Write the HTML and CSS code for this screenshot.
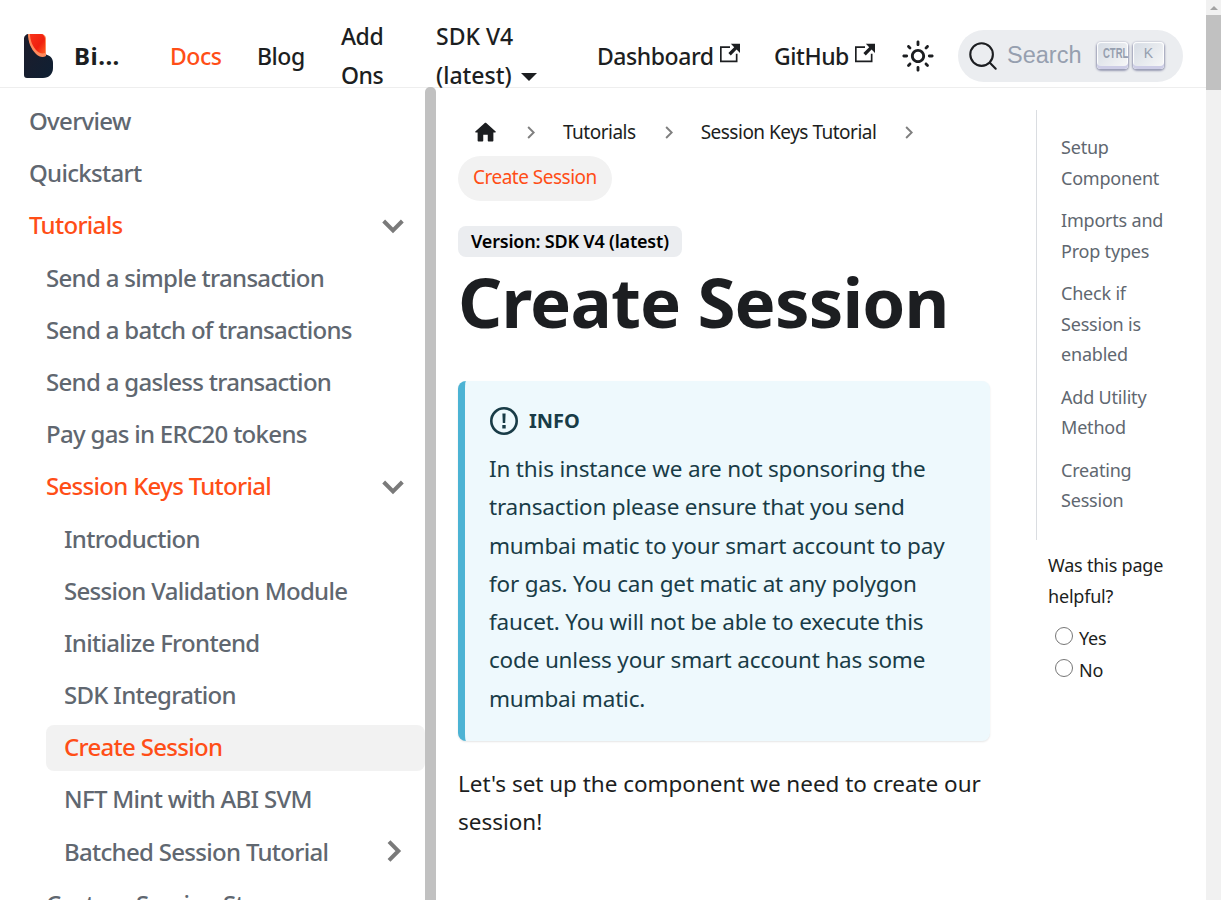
FILE: index.html
```html
<!DOCTYPE html>
<html lang="en">
<head>
<meta charset="utf-8">
<title>Create Session</title>
<link rel="stylesheet" href="styles.css">
</head>
<body>
<div class="page">
  <div class="site">
    <nav class="navbar">
      <a class="brand">
        <svg class="logo" viewBox="0 0 29 44">
          <defs>
            <linearGradient id="dark" x1="0" y1="0" x2="1" y2="1"><stop offset="0" stop-color="#1d1c2b"/><stop offset="1" stop-color="#0f2033"/></linearGradient>
            <linearGradient id="flame" x1="0" y1="0" x2="1" y2="1"><stop offset="0" stop-color="#f8331a"/><stop offset=".6" stop-color="#f0200e"/><stop offset="1" stop-color="#ff5a1f"/></linearGradient>
          </defs>
          <path fill="url(#dark)" d="M5 0h12v20h3c6 1 9 4 9 9v5c0 6-4 10-10 10H3c-2 0-3-1-3-3V5c0-3 2-5 5-5z"/>
          <path fill="#ff8a5c" d="M4 0h13c3 0 5 2 5 5v17c-3 2-7 1-10-2C7 15 4 8 4 0z"/>
          <path fill="url(#flame)" d="M6 0h11c2 0 4 2 4 5v14c-3 1-6 0-8-2C9 13 6 7 6 0z"/>
        </svg>
        <b class="brand-name">Bi...</b>
      </a>
      <a class="nav-link active docs">Docs</a>
      <a class="nav-link blog">Blog</a>
      <a class="nav-link addons">Add Ons</a>
      <a class="nav-link sdk">SDK V4 (latest) <i class="caret"></i></a>
      <a class="nav-link dash">Dashboard <svg class="ext" viewBox="0 0 24 24"><path fill="currentColor" d="M21 13v10h-21v-19h12v2h-10v15h17v-8h2zm3-12h-10.988l4.035 4-6.977 7.07 2.828 2.828 6.977-7.07 4.125 4.172v-11z"/></svg></a>
      <a class="nav-link hub">GitHub <svg class="ext" viewBox="0 0 24 24"><path fill="currentColor" d="M21 13v10h-21v-19h12v2h-10v15h17v-8h2zm3-12h-10.988l4.035 4-6.977 7.07 2.828 2.828 6.977-7.07 4.125 4.172v-11z"/></svg></a>
      <svg class="sun" viewBox="0 0 24 24"><path fill="currentColor" d="M12,9c1.65,0,3,1.35,3,3s-1.35,3-3,3s-3-1.35-3-3S10.35,9,12,9 M12,7c-2.76,0-5,2.24-5,5s2.24,5,5,5s5-2.24,5-5 S14.76,7,12,7L12,7z M2,13l2,0c0.55,0,1-0.45,1-1s-0.45-1-1-1l-2,0c-0.55,0-1,0.45-1,1S1.45,13,2,13z M20,13l2,0c0.55,0,1-0.45,1-1 s-0.45-1-1-1l-2,0c-0.55,0-1,0.45-1,1S19.45,13,20,13z M11,2v2c0,0.55,0.45,1,1,1s1-0.45,1-1V2c0-0.55-0.45-1-1-1S11,1.45,11,2z M11,20v2c0,0.55,0.45,1,1,1s1-0.45,1-1v-2c0-0.55-0.45-1-1-1C11.45,19,11,19.45,11,20z M5.99,4.58c-0.39-0.39-1.03-0.39-1.41,0 c-0.39,0.39-0.39,1.03,0,1.41l1.06,1.06c0.39,0.39,1.03,0.39,1.41,0s0.39-1.03,0-1.41L5.99,4.58z M18.36,16.95 c-0.39-0.39-1.03-0.39-1.41,0c-0.39,0.39-0.39,1.03,0,1.41l1.06,1.06c0.39,0.39,1.03,0.39,1.41,0c0.39-0.39,0.39-1.03,0-1.41 L18.36,16.95z M19.42,5.99c0.39-0.39,0.39-1.03,0-1.41c-0.39-0.39-1.03-0.39-1.41,0l-1.06,1.06c-0.39,0.39-0.39,1.03,0,1.41 s1.03,0.39,1.41,0L19.42,5.99z M7.05,18.36c0.39-0.39,0.39-1.03,0-1.41c-0.39-0.39-1.03-0.39-1.41,0l-1.06,1.06 c-0.39,0.39-0.39,1.03,0,1.41s1.03,0.39,1.41,0L7.05,18.36z"/></svg>
      <div class="search">
        <svg class="search-icon" viewBox="0 0 20 20"><path d="M14.386 14.386l4.0877 4.0877-4.0877-4.0877c-2.9418 2.9419-7.7115 2.9419-10.6533 0-2.9419-2.9418-2.9419-7.7115 0-10.6533 2.9418-2.9419 7.7115-2.9419 10.6533 0 2.9419 2.9418 2.9419 7.7115 0 10.6533z" stroke="currentColor" fill="none" stroke-width="1.4" stroke-linecap="round" stroke-linejoin="round"/></svg>
        <span class="search-text">Search</span>
        <kbd class="key"><span class="ctrl">CTRL</span></kbd>
        <kbd class="key">K</kbd>
      </div>
    </nav>

    <div class="layout">
      <aside class="sidebar">
        <ul class="menu">
          <li class="item">Overview</li>
          <li class="item">Quickstart</li>
          <li class="item active">Tutorials <svg class="chev" viewBox="0 0 24 24"><path d="M5 9l7 7 7-7"/></svg></li>
          <li class="item l1">Send a simple transaction</li>
          <li class="item l1">Send a batch of transactions</li>
          <li class="item l1">Send a gasless transaction</li>
          <li class="item l1">Pay gas in ERC20 tokens</li>
          <li class="item l1 active">Session Keys Tutorial <svg class="chev" viewBox="0 0 24 24"><path d="M5 9l7 7 7-7"/></svg></li>
          <li class="item l2">Introduction</li>
          <li class="item l2">Session Validation Module</li>
          <li class="item l2">Initialize Frontend</li>
          <li class="item l2">SDK Integration</li>
          <li class="item l2 active current">Create Session</li>
          <li class="item l2">NFT Mint with ABI SVM</li>
          <li class="item l2">Batched Session Tutorial <svg class="chev" viewBox="0 0 24 24"><path d="M9 5l7 7-7 7"/></svg></li>
          <li class="item l1">Custom Session Storage</li>
        </ul>
      </aside>
      <div class="side-scroll"></div>

      <main class="content">
        <ul class="crumbs">
          <li class="crumb-home"><svg class="home" viewBox="0 0 24 24"><path fill="currentColor" d="M10 19v-5h4v5c0 .55.45 1 1 1h3c.55 0 1-.45 1-1v-7h1.7c.46 0 .68-.57.33-.87L12.67 3.6c-.38-.34-.96-.34-1.34 0l-8.36 7.53c-.34.3-.13.87.33.87H5v7c0 .55.45 1 1 1h3c.55 0 1-.45 1-1z"/></svg></li>
          <li class="sep"><svg viewBox="0 0 24 24"><path d="M9 5l7 7-7 7"/></svg></li>
          <li class="crumb">Tutorials</li>
          <li class="sep"><svg viewBox="0 0 24 24"><path d="M9 5l7 7-7 7"/></svg></li>
          <li class="crumb">Session Keys Tutorial</li>
          <li class="sep"><svg viewBox="0 0 24 24"><path d="M9 5l7 7-7 7"/></svg></li>
          <li class="crumb current">Create Session</li>
        </ul>
        <span class="badge">Version: SDK V4 (latest)</span>
        <h1 class="title">Create Session</h1>
        <div class="info">
          <div class="info-head">
            <svg class="info-icon" viewBox="0 0 30 30"><circle cx="15" cy="15" r="12.7" fill="none" stroke="currentColor" stroke-width="2.6"/><path fill="currentColor" d="M13.4 7.5h3.2l-.4 9.5h-2.4zM13.3 19h3.4v3.4h-3.4z"/></svg>
            INFO
          </div>
          <p>In this instance we are not sponsoring the transaction please ensure that you send mumbai matic to your smart account to pay for gas. You can get matic at any polygon faucet. You will not be able to execute this code unless your smart account has some mumbai matic.</p>
        </div>
        <p class="prose">Let's set up the component we need to create our session!</p>
      </main>

      <div class="rail">
        <ul class="toc">
          <li>Setup Component</li>
          <li>Imports and Prop types</li>
          <li>Check if Session is enabled</li>
          <li>Add Utility Method</li>
          <li>Creating Session</li>
        </ul>
        <form class="helpful">
          <p>Was this page helpful?</p>
          <label class="choice"><input type="radio" name="helpful"> Yes</label>
          <label class="choice"><input type="radio" name="helpful"> No</label>
        </form>
      </div>
    </div>
  </div>

  <div class="page-scroll"><i class="arrow"></i><div class="thumb"></div></div>
</div>
</body>
</html>
```

FILE: styles.css
```css
* {
  box-sizing: border-box;
}

html, body {
  margin: 0;
  height: 900px;
  overflow: hidden;
}

body {
  font-family: "Noto Sans", "Open Sans", sans-serif;
  color: #1c1e21;
  background: #fff;
}

ul {
  list-style: none;
  margin: 0;
  padding: 0;
}

.page {
  display: flex;
  height: 900px;
}

.site {
  flex: 1;
  min-width: 0;
}

.page-scroll {
  width: 15px;
  background: #f1f1f1;
  position: relative;
}

.arrow {
  display: block;
  margin: 6px auto 0;
  width: 0;
  border-left: 4px solid transparent;
  border-right: 4px solid transparent;
  border-bottom: 4px solid #a3a3a3;
}

.thumb {
  margin-top: 5px;
  height: 75px;
  background: #c1c1c1;
}

/* navbar */
.navbar {
  height: 88px;
  display: flex;
  align-items: center;
  border-bottom: 1px solid #eee;
  padding: 24px 0 0 24px;
  font-size: 23px;
  letter-spacing: -.45px;
  font-weight: 500;
}

.brand {
  display: flex;
  align-items: center;
  width: 146px;
  flex: none;
}

.logo {
  width: 29px;
  height: 44px;
  margin-right: 21px;
}

.brand-name {
  font-size: 24px;
  letter-spacing: .5px;
  font-weight: 700;
}

.nav-link {
  flex: none;
  line-height: 39px;
}

.active {
  color: #ff4e17;
}

.docs { width: 87px; padding-top: 2px; }
.blog { width: 84px; padding-top: 2px; }
.addons { width: 95px; padding-right: 40px; }
.sdk { width: 161px; padding-right: 20px; letter-spacing: 0; }
.dash { width: 177px; padding-top: 2px; }
.hub { width: 127px; padding-top: 2px; }

.caret {
  display: inline-block;
  margin-left: 3px;
  vertical-align: middle;
  border-left: 8px solid transparent;
  border-right: 8px solid transparent;
  border-top: 8px solid #1c1e21;
}

.ext {
  width: 20px;
  height: 20px;
  vertical-align: 2px;
  margin-left: 1px;
}

.sun {
  width: 34px;
  height: 34px;
  flex: none;
  margin-right: 23px;
}

.search {
  flex: none;
  width: 225px;
  height: 52px;
  border-radius: 26px;
  background: #ebedf0;
  display: flex;
  align-items: center;
  padding-left: 10px;
  font-weight: 400;
  letter-spacing: 0;
}

.search-icon {
  width: 30px;
  height: 30px;
  flex: none;
}

.search-text {
  color: #969faf;
  font-family: "Liberation Sans", sans-serif;
  font-size: 23.5px;
  margin-left: 9px;
  width: 89px;
}

.key {
  width: 31px;
  height: 27px;
  margin: 0 4px 0 1px;
  border-radius: 4px;
  background: linear-gradient(-225deg, #d5dbe4, #f8f8f8);
  box-shadow: inset 0 -3px 0 0 #cdcde6, inset 0 0 1px 1px #fff, 0 1px 2px 1px rgba(30, 35, 90, .4);
  color: #969faf;
  font-family: "Liberation Sans", sans-serif;
  font-size: 14px;
  text-align: center;
  line-height: 23px;
}

.ctrl {
  display: inline-block;
  font-size: 14px;
  font-weight: 700;
  transform: scaleX(.68);
}

/* three columns under the navbar */
.layout {
  display: flex;
  height: 812px;
}

.sidebar {
  width: 425px;
  flex: none;
  overflow: hidden;
  padding-top: 10.5px;
}

.side-scroll {
  width: 11px;
  flex: none;
  background: #c1c1c1;
  border-radius: 5px 5px 0 0;
  margin-top: -1px;
  height: 813px;
}

.item {
  height: 46px;
  margin-bottom: 6.2px;
  padding: 0 0 2px 29px;
  display: flex;
  align-items: center;
  justify-content: space-between;
  font-size: 24px;
  font-weight: 500;
  letter-spacing: -.7px;
  color: #606770;
  border-radius: 8px;
  white-space: nowrap;
}

.item.active {
  color: #ff4e17;
}

.l1 {
  padding-left: 46px;
}

.l2 {
  margin-left: 46px;
  padding-left: 18px;
}

.current {
  background: #f2f2f2;
}

.chev {
  width: 32px;
  height: 32px;
  margin-right: 16px;
  fill: none;
  stroke: #7a7a7a;
  stroke-width: 3;
}

/* main column */
.content {
  width: 600px;
  flex: none;
  padding: 22px 46px 0 22px;
}

.crumbs {
  display: flex;
  flex-wrap: wrap;
  align-items: center;
  font-size: 19px;
  letter-spacing: -.5px;
  margin-bottom: 25px;
}

.crumbs li {
  height: 45px;
  display: flex;
  align-items: center;
}

.crumb-home {
  padding: 0 16px 0 14px;
}

.home {
  width: 27px;
  height: 27px;
  color: #1c1e21;
}

.sep svg {
  width: 19px;
  height: 19px;
  fill: none;
  stroke: #7f7f7f;
  stroke-width: 2.4;
  display: block;
}

.sep {
  padding: 0 8px 0 6px;
}

.crumb {
  padding: 0 17px 2px 15px;
}

.crumbs .crumb.current {
  background: #f2f2f2;
  color: #ff4e17;
  border-radius: 23px;
  padding: 0 15px 3px;
  margin-top: 1px;
}

.badge {
  display: inline-block;
  height: 31px;
  padding: 0 13px;
  border-radius: 8px;
  background: #ebedf0;
  font-size: 18px;
  font-weight: 600;
  letter-spacing: -.2px;
  line-height: 31px;
  color: #000;
}

.title {
  margin: 0 0 36px;
  font-size: 69px;
  line-height: 88px;
  font-weight: 700;
  letter-spacing: -.85px;
}

.info {
  background: #eef9fd;
  border-left: 7px solid #4cb3d4;
  border-radius: 8px;
  color: #193c47;
  padding: 22px 23px 22px 24px;
  height: 360px;
  box-shadow: 0 1px 2px rgba(0, 0, 0, .1);
}

.info-head {
  display: flex;
  align-items: center;
  gap: 10px;
  font-size: 20px;
  font-weight: 700;
  height: 35px;
  margin-bottom: 12px;
}

.info-icon {
  width: 30px;
  height: 30px;
}

.info p {
  margin: 0;
  font-size: 22.5px;
  line-height: 38.3px;
  letter-spacing: -.18px;
}

.prose {
  margin: 24px 0 0;
  font-size: 22.5px;
  line-height: 38.3px;
  letter-spacing: -.03px;
}

/* toc and feedback */
.rail {
  width: 170px;
  flex: none;
  padding-top: 22px;
}

.toc {
  border-left: 1px solid #dadde1;
  padding: 22px 30px 24px 24px;
  font-size: 18px;
  letter-spacing: -.2px;
  line-height: 30.5px;
  color: #606770;
  height: 430px;
}

.toc li {
  margin-bottom: 12px;
}

.helpful {
  padding: 10px 0 0 12px;
  font-size: 18px;
  letter-spacing: -.2px;
}

.helpful p {
  margin: 0 0 10px;
  line-height: 31px;
}

.choice {
  display: flex;
  align-items: center;
  gap: 6px;
  height: 32px;
  padding-left: 7px;
}

.choice input {
  margin: -4px 0 0;
  width: 18px;
  height: 18px;
}
```
